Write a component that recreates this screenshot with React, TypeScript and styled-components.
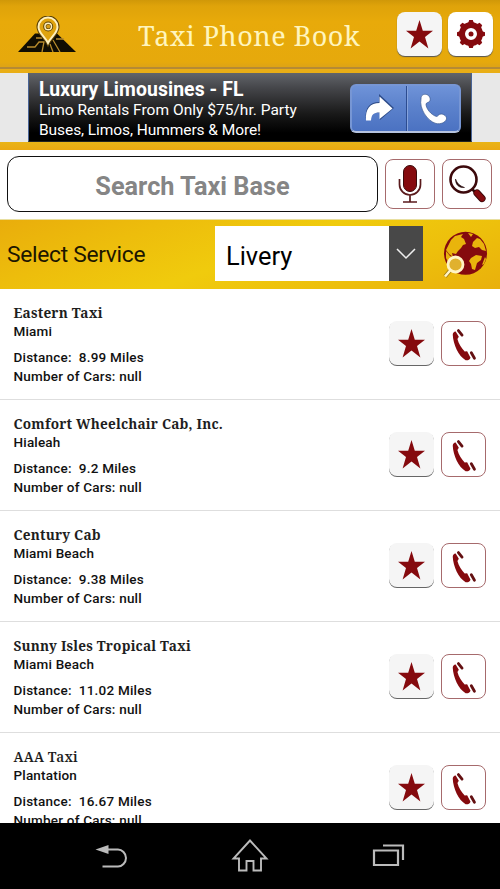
import React from 'react';
import styled, { createGlobalStyle } from 'styled-components';

const RED = '#850a0e';

const GlobalStyle = createGlobalStyle`
  * { box-sizing: border-box; }
  html, body { margin: 0; padding: 0; background: #000; overflow: hidden; }
  body { font-family: Roboto, "Liberation Sans", sans-serif; }
  button { padding: 0; margin: 0; font: inherit; }
  svg { display: block; }
`;

const Screen = styled.div`
  width: 500px;
  height: 889px;
  display: flex;
  flex-direction: column;
  overflow: hidden;
  background: #fff;
`;

const Header = styled.header`
  flex: none;
  height: 69px;
  display: flex;
  align-items: flex-start;
  padding: 12px 7px 0 17px;
  background: linear-gradient(#d09808 0, #dfa30a 6px, #e8aa0a 22px, #e6a90c 62px, #dfa414 66px);
  border-bottom: 2px solid #b58a35;
`;

const Logo = styled.div`
  width: 60px;
  padding-top: 4px;
`;

const Title = styled.h1`
  margin: 5px 0 0 61px;
  width: 259px;
  font: 400 27px/38px "Droid Serif", "Noto Serif", "DejaVu Serif", serif;
  letter-spacing: 0.5px;
  color: #fff5bd;
  white-space: nowrap;
`;

const Tile = styled.button<{ $tone?: string; $flat?: boolean }>`
  width: 45px;
  height: 44px;
  margin-right: 6px;
  display: flex;
  align-items: center;
  justify-content: center;
  border: 0;
  border-radius: 8px;
  background: ${(p) => p.$tone ?? '#f5f5f5'};
  box-shadow: ${(p) => (p.$flat ? '0 1px 0 #666' : '0 1px 1px #555')};
  &:last-child { margin-right: 0; }
`;

const OutlineTile = styled.button<{ $size: number }>`
  width: ${(p) => p.$size}px;
  height: ${(p) => p.$size}px;
  display: flex;
  align-items: center;
  justify-content: center;
  border: 1px solid #a66a6c;
  border-radius: 8px;
  background: #fff;
`;

const AdStrip = styled.section`
  flex: none;
  height: 81px;
  padding: 4px 0 8px;
  display: flex;
  justify-content: center;
  background:
    linear-gradient(#e9ae16, #e9ae16) 0 0 / 100% 4px no-repeat,
    linear-gradient(#e9b417, #eba912) 0 100% / 100% 8px no-repeat,
    #e8e8e8;
`;

const AdCard = styled.div`
  width: 444px;
  height: 69px;
  display: flex;
  justify-content: space-between;
  padding: 6px 10px 0 10px;
  border: 1px solid #496496;
  border-top: 0;
  border-bottom-color: #222;
  background: linear-gradient(#62656a 0, #45464a 22%, #191919 60%, #000 88%);
  color: #fff;
`;

const AdTitle = styled.div`
  font-size: 19.4px;
  font-weight: 700;
  line-height: 22px;
  letter-spacing: 0.08px;
  white-space: nowrap;
`;

const AdLine = styled.div<{ $tracking: number }>`
  font-size: 15.5px;
  line-height: 19.5px;
  letter-spacing: ${(p) => p.$tracking}px;
  white-space: nowrap;
`;

const AdActions = styled.div`
  width: 111px;
  height: 49px;
  margin-top: 5px;
  display: grid;
  grid-template-columns: 1fr 1fr;
  border: 2px solid #7796d4;
  border-bottom-color: #b7c4df;
  border-radius: 6px;
  background: linear-gradient(#6f93d8, #5c82cc 45%, #4b72c2);
`;

const AdAction = styled.div`
  display: flex;
  align-items: center;
  justify-content: center;
  & + & { border-left: 1px solid #2c4c90; box-shadow: inset 1px 0 #86a3dc; }
`;

const SearchBar = styled.section`
  flex: none;
  height: 70px;
  display: flex;
  align-items: flex-start;
  padding: 6px 8px 0 7px;
  background: #fff;
  border-bottom: 1px solid #e8dfa0;
`;

const SearchField = styled.div`
  width: 371px;
  height: 56px;
  margin-right: 7px;
  border: 1.5px solid #111;
  border-radius: 12px;
  text-align: center;
  font-size: 25.3px;
  font-weight: 700;
  line-height: 59px;
  color: #858585;
`;

const SearchButtons = styled.div`
  display: flex;
  gap: 7px;
  margin-top: 3px;
`;

const ServiceBar = styled.section`
  flex: none;
  height: 69px;
  display: flex;
  align-items: flex-start;
  padding: 6px 0 0 7px;
  background: linear-gradient(160deg, #e9ad0c 0, #edbd0c 25%, #f0cb0d 50%, #edbf0c 75%, #e9b00c 100%);
`;

const ServiceLabel = styled.div`
  width: 208px;
  font-size: 22.8px;
  letter-spacing: -0.3px;
  line-height: 58px;
  color: #1c1600;
`;

const Select = styled.div`
  width: 208px;
  height: 55px;
  display: flex;
  background: #fff;
`;

const SelectValue = styled.div`
  flex: 1;
  padding-left: 11px;
  font-size: 25.4px;
  line-height: 60px;
  color: #000;
`;

const SelectArrow = styled.div`
  width: 34px;
  display: flex;
  align-items: center;
  justify-content: center;
  background: #484848;
`;

const GlobeButton = styled.div`
  margin: 4px 0 0 19px;
`;

const List = styled.main`
  flex: 1;
  min-height: 0;
  overflow: hidden;
  background: #fff;
`;

const Row = styled.article`
  height: 111.1px;
  display: flex;
  justify-content: space-between;
  padding: 14px 14px 0 13.5px;
  border-bottom: 1px solid #dedede;
`;

const Name = styled.h2<{ $weight: number }>`
  margin: 0;
  font: ${(p) => p.$weight} 13.6px/20px "Droid Serif", "Noto Serif", "DejaVu Serif", serif;
  letter-spacing: 0.2px;
  color: #1e1e1e;
  white-space: pre;
`;

const Detail = styled.div<{ $gap?: boolean }>`
  margin-top: ${(p) => (p.$gap ? 7 : 0)}px;
  font-size: 13.5px;
  font-weight: 500;
  line-height: 19px;
  letter-spacing: 0.21px;
  color: #111;
  white-space: pre;
  &:nth-child(2) { margin-top: -1px; letter-spacing: 0.18px; }
`;

const RowActions = styled.div`
  display: flex;
  gap: 1px;
  padding-top: 18px;
`;

const NavBar = styled.nav`
  flex: none;
  height: 66px;
  display: flex;
  align-items: flex-start;
  padding: 15px 0 0 94px;
  background: #000;
`;

const NavItem = styled.div<{ $left?: number }>`
  margin-left: ${(p) => p.$left ?? 0}px;
`;

const StarIcon = ({ size = 29 }: { size?: number }) => (
  <svg width={size} height={size} viewBox="0 0 29 29">
    <path fill={RED} d="M14.500 0 17.800 10.800H28L20 17l3.400 11.500-8.900-7-8.900 7L9 17 1 10.800h10.200z" />
  </svg>
);

const GearIcon = () => (
  <svg width="30" height="30" viewBox="-15 -15 30 30">
    <circle r="9" fill="none" stroke={RED} strokeWidth="6" />
    {[0, 45, 90, 135, 180, 225, 270, 315].map((a) => (
      <path key={a} d="M-3-10.500-1.800-14H1.800L3-10.500z" fill={RED} transform={`rotate(${a})`} />
    ))}
    <circle r="2.500" fill={RED} />
  </svg>
);

const MapLogo = () => (
  <svg width="60" height="38" viewBox="0 0 60 38">
    <path fill="#110d02" d="M18 17.500h22L59 36H1z" />
    <g fill="none" stroke="#b98c2c" strokeWidth="1.300">
      <path d="M10 31h8l4-5h5l-2 10M19 22h6M33 28l3 8M36 24l7 12M39 23h8" />
    </g>
    <path
      fill="#dfa30f"
      stroke="#5a4005"
      strokeWidth="4"
      d="M31 27C28 21 21.500 17 21.500 11a9.500 9.500 0 0 1 19 0c0 6-6.500 10-9.500 16z"
    />
    <path
      fill="#dfa30f"
      stroke="#fff0bd"
      strokeWidth="2"
      d="M31 27C28 21 21.500 17 21.500 11a9.500 9.500 0 0 1 19 0c0 6-6.500 10-9.500 16z"
    />
    <circle cx="31.200" cy="10.500" r="3.500" fill="#d79d15" stroke="#5a4005" strokeWidth="3" />
    <circle cx="31.200" cy="10.500" r="3.300" fill="none" stroke="#fff0bd" strokeWidth="1.500" />
  </svg>
);

const ShareIcon = () => (
  <svg width="30" height="32" viewBox="0 0 30 32">
    <path fill="#2d4b88" d="M1.500 25C1.500 14 6 9 15 9V1L30 15 16 27v-7C9 19.500 5 20 3 27z" />
    <path fill="#fff" d="M2 27.500C1 15.500 6.500 10 15.500 10V3.500L28.500 15.500 15.500 26v-6.500c-6 0-8 2-8.500 8z" />
  </svg>
);

const HandsetIcon = () => (
  <svg width="30" height="32" viewBox="0 0 30 32">
    <path
      fill="#fff"
      stroke="#38588f"
      strokeWidth=".7"
      d="M3 6C3 1.500 6 1 8.500 1.500 12 2.500 13 6.500 11.500 8.500 10.500 9.500 8.500 9.500 8 11c0 5 5.500 11 10.500 12.500 1.500 0 2-2.500 4.500-2.500 3 0 6 2.500 5.500 5-1 3.500-6 5.500-10.500 4.500C9 28 1 15 3 6z"
    />
  </svg>
);

const MicIcon = () => (
  <svg width="24" height="40" viewBox="0 0 24 40">
    <rect x="5.500" y="1.500" width="13" height="26" rx="6.500" fill={RED} stroke="#3c0a0b" strokeWidth="1" />
    <g fill="none" stroke="#5a1a1c" strokeWidth="1.700">
      <path d="M1.500 15v5.500a10.500 10.500 0 0 0 21 0V15M12 31v7M5 38h14" />
    </g>
  </svg>
);

const MagnifierIcon = () => (
  <svg width="40" height="40" viewBox="0 0 40 40">
    <path d="M25.500 25.500l4 4" stroke="#2d0808" strokeWidth="2.500" />
    <path d="M30 29l5 5.500" stroke="#3a0809" strokeWidth="7.200" strokeLinecap="round" />
    <path d="M30 29l5 5.500" stroke={RED} strokeWidth="5.500" strokeLinecap="round" />
    <circle cx="16.500" cy="15.500" r="13" fill="#fff" stroke="#3c090b" strokeWidth="2.600" />
    <path d="M8.500 15c0 6 3.500 9 9 8.500-4.500-1.500-7.500-4-9-8.500z" fill="#26090a" stroke="#26090a" strokeWidth=".6" />
  </svg>
);

const ChevronIcon = () => (
  <svg width="20" height="12" viewBox="0 0 20 12">
    <path d="M1 1l9 9 9-9" fill="none" stroke="#eee" strokeWidth="1.500" />
  </svg>
);

const GlobeIcon = () => (
  <svg width="48" height="50" viewBox="0 0 48 50">
    <circle cx="23.500" cy="23.300" r="21.500" fill={RED} />
    <g fill="#e9b40c">
      <path d="M9 10l4-4 8-2-2 3 3 2 2 5-3 1-2 3-3 3-2 3-4-1 1 4-4-3-3-4z" />
      <path d="M4 21l4 5 5 2 5 1 4 3-2 6-6 3-6-5-4-8z" />
      <path d="M26 3l5 1-2 3z M31 12l4-4 3 1 4 5 2 7-4-1-3-3-4 1-3-2z" />
      <path d="M29 28l5-3 6 1-1 4-4 3-2 7-3-1-1-5-2-3z" />
      <path d="M43 27l1 2-2 5-2 1z" />
    </g>
    <path d="M9 39.500l-6 7" stroke="#9c750c" strokeWidth="4" />
    <path d="M9 39.500l-6 7" stroke="#fff4c5" strokeWidth="2.600" />
    <circle cx="13.500" cy="34.500" r="7.500" fill="#e0b12e" stroke="#fff4c5" strokeWidth="2.800" />
  </svg>
);

const CallIcon = () => (
  <svg width="44" height="44" viewBox="0 0 44 44">
    <path
      fill={RED}
      d="M11 12.500c0-2 1.500-3.500 3-3.300l3.200 5.300-1.400 2.500c1.200 5 4.200 9.500 7.400 12.700l2.500-.2 3.500 6.500c-1 2.200-3 3-5 2.500C17 34.500 11.500 22.500 11 12.500z"
    />
    <path d="M16.800 8.200l3.700 4.700M30 31l3.200 5.500" stroke="#641012" strokeWidth="2.900" strokeLinecap="round" />
  </svg>
);

const BackIcon = () => (
  <svg width="34" height="34" viewBox="0 0 34 34">
    <path d="M1.500 11.500L14.500 7v9z" fill="#bbb" />
    <path d="M13 11.500h11c4 0 8 4 8 8.500s-4 8.500-8 8.500H8.500" fill="none" stroke="#bbb" strokeWidth="2" />
  </svg>
);

const HomeIcon = () => (
  <svg width="38" height="36" viewBox="0 0 38 36">
    <path
      d="M19 2.500L2.500 20.500H8v12h7.500V23h7v9.500H30v-12h5.500z"
      fill="none"
      stroke="#bbb"
      strokeWidth="1.900"
    />
  </svg>
);

const RecentsIcon = () => (
  <svg width="34" height="34" viewBox="0 0 34 34">
    <path d="M2 12.500h24V27H2zM11 7.500h20V22" fill="none" stroke="#bbb" strokeWidth="2.200" />
  </svg>
);

const companies = [
  { name: 'Eastern Taxi', city: 'Miami', miles: '8.99', weight: 700 },
  { name: 'Comfort Wheelchair Cab, Inc.', city: 'Hialeah', miles: '9.2', weight: 700 },
  { name: 'Century Cab', city: 'Miami Beach', miles: '9.38', weight: 700 },
  { name: 'Sunny Isles Tropical Taxi', city: 'Miami Beach', miles: '11.02', weight: 700 },
  { name: 'AAA Taxi', city: 'Plantation', miles: '16.67', weight: 600 },
];

export default function App() {
  return (
    <Screen>
      <GlobalStyle />
      <Header>
        <Logo><MapLogo /></Logo>
        <Title>Taxi Phone Book</Title>
        <Tile aria-label="Favorites"><StarIcon /></Tile>
        <Tile aria-label="Settings" $tone="#fff"><GearIcon /></Tile>
      </Header>
      <AdStrip>
        <AdCard>
          <div>
            <AdTitle>Luxury Limousines - FL</AdTitle>
            <AdLine $tracking={0.02}>Limo Rentals From Only $75/hr. Party</AdLine>
            <AdLine $tracking={-0.07}>Buses, Limos, Hummers &amp; More!</AdLine>
          </div>
          <AdActions>
            <AdAction><ShareIcon /></AdAction>
            <AdAction><HandsetIcon /></AdAction>
          </AdActions>
        </AdCard>
      </AdStrip>
      <SearchBar>
        <SearchField>Search Taxi Base</SearchField>
        <SearchButtons>
          <OutlineTile $size={50} aria-label="Voice search"><MicIcon /></OutlineTile>
          <OutlineTile $size={50} aria-label="Search"><MagnifierIcon /></OutlineTile>
        </SearchButtons>
      </SearchBar>
      <ServiceBar>
        <ServiceLabel>Select Service</ServiceLabel>
        <Select>
          <SelectValue>Livery</SelectValue>
          <SelectArrow><ChevronIcon /></SelectArrow>
        </Select>
        <GlobeButton><GlobeIcon /></GlobeButton>
      </ServiceBar>
      <List>
        {companies.map((c) => (
          <Row key={c.name}>
            <div>
              <Name $weight={c.weight}>{c.name}</Name>
              <Detail>{c.city}</Detail>
              <Detail $gap>{`Distance:  ${c.miles} Miles`}</Detail>
              <Detail>Number of Cars: null</Detail>
            </div>
            <RowActions>
              <Tile $flat aria-label="Add to favorites"><StarIcon /></Tile>
              <OutlineTile $size={45} aria-label="Call"><CallIcon /></OutlineTile>
            </RowActions>
          </Row>
        ))}
      </List>
      <NavBar>
        <NavItem><BackIcon /></NavItem>
        <NavItem $left={103}><HomeIcon /></NavItem>
        <NavItem $left={103}><RecentsIcon /></NavItem>
      </NavBar>
    </Screen>
  );
}
